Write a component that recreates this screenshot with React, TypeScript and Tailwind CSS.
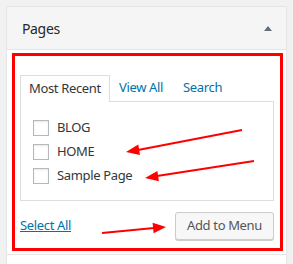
export default function App() {
  return (
    <div className="relative w-[293px] h-[264px] overflow-hidden bg-[#f1f1f1] font-['Noto_Sans',sans-serif] text-[13px] tracking-[-0.35px] text-[#32373c]">
      {/* Pages accordion */}
      <div className="ml-[6px] mt-[6px] w-[281px] border border-[#e5e5e5] bg-white">
        <div className="flex h-[43px] items-center justify-between border-b border-[#e5e5e5] bg-[#f5f5f5] pl-[15px] pr-[14px]">
          <span className="text-[14px] text-[#23282d]">Pages</span>
          <svg width="8" height="5" viewBox="0 0 8 5">
            <polygon points="4,0 8,5 0,5" fill="#646d78" />
          </svg>
        </div>

        <div className="pl-[5px] pt-[3px] pb-[3px]">
          <div className="h-[198px] w-[271px] border-[3px] border-[#ff0000] pl-[5px] pt-[19px]">
            {/* Tabs */}
            <div className="flex h-[26px] items-stretch">
              <div className="relative z-10 -mb-px flex w-[90px] items-center border border-b-0 border-[#dddddd] bg-white pl-[8px] text-[#32373c]">
                Most Recent
              </div>
              <div className="ml-[9px] flex items-center text-[#0073aa]">View All</div>
              <div className="ml-[20px] flex items-center text-[#0073aa]">Search</div>
            </div>

            <div className="h-[100px] w-[254px] border border-[#dddddd] pl-[12px] pt-[18px]">
              <div className="flex flex-col gap-[8px]">
                {['BLOG', 'HOME', 'Sample Page'].map((label) => (
                  <div key={label} className="flex h-[16px] items-center">
                    <span className="h-[16px] w-[16px] border border-[#b4b9be] bg-white shadow-[inset_0_1px_2px_rgba(0,0,0,0.1)]" />
                    <span className="ml-[8px]">{label}</span>
                  </div>
                ))}
              </div>
            </div>

            <div className="mt-[11px] flex w-[254px] items-center justify-between">
              <span className="text-[#0073aa] underline">Select All</span>
              <button className="h-[28px] w-[99px] rounded-[3px] border border-[#cccccc] bg-[#f7f7f7] text-[#555555] shadow-[0_1px_0_#cccccc]">
                Add to Menu
              </button>
            </div>
          </div>
        </div>

        <div className="h-[20px] border-t border-[#e5e5e5] bg-white" />
      </div>

      {/* Red arrows over the page */}
      <svg className="pointer-events-none absolute left-0 top-0" width="293" height="264" viewBox="0 0 293 264">
        <g stroke="#ff0000" strokeWidth="2" fill="none">
          <line x1="242" y1="130" x2="138" y2="150" />
          <line x1="254" y1="161" x2="157" y2="176" />
          <line x1="102" y1="233" x2="154" y2="228" />
        </g>
        <g fill="#ff0000">
          <polygon points="126,152 138.3,144.6 140,155" />
          <polygon points="145,178 157.4,171 158.9,181.2" />
          <polygon points="166,227 153.6,233.2 152.6,222.8" />
        </g>
      </svg>
    </div>
  );
}
